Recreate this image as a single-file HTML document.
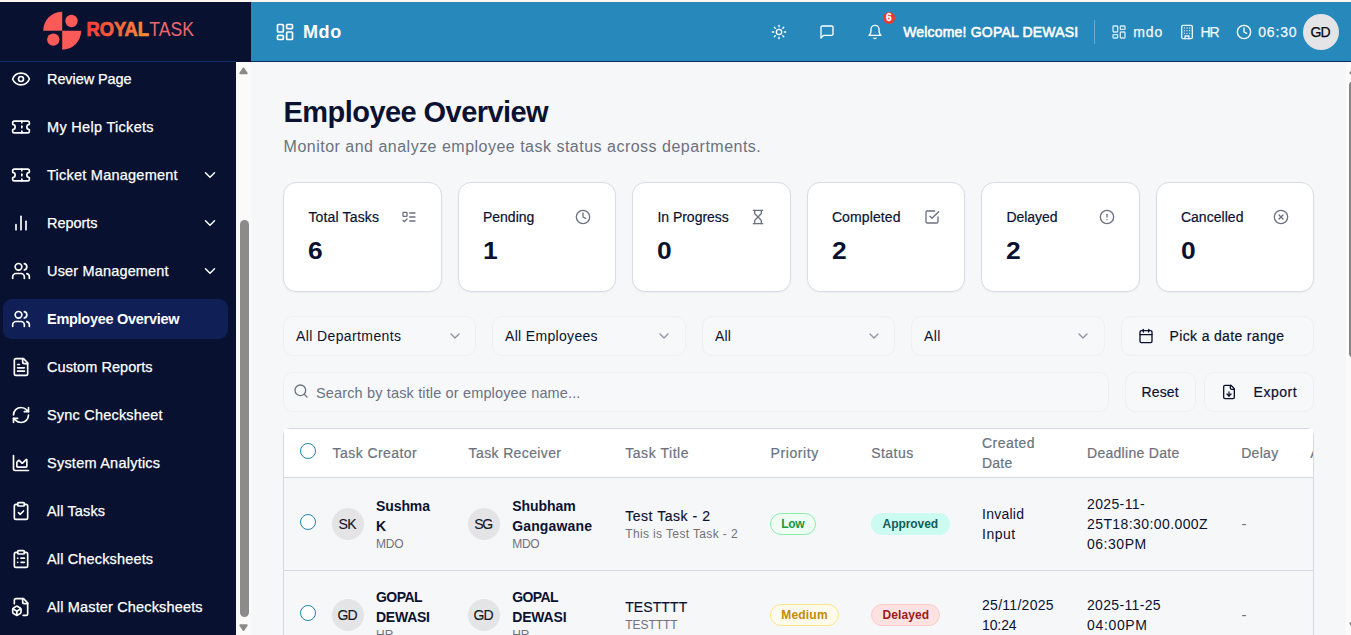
<!DOCTYPE html>
<html lang="en"><head><meta charset="utf-8"><title>Employee Overview</title>
<style>
html,body{margin:0;padding:0;}
body{width:1351px;height:635px;overflow:hidden;position:relative;background:#f6f7f9;font-family:"Liberation Sans", sans-serif;}
#app{position:absolute;left:0;top:0;width:1351px;height:635px;overflow:hidden;}
#app div,#app svg,#app span{position:absolute;box-sizing:border-box;}
#app svg{display:block;overflow:visible;}
.t{white-space:nowrap;line-height:1;}
</style></head><body><div id="app">
<div style="left:0px;top:0px;width:1351px;height:2px;background:#fff5ef;"></div>
<div style="left:0px;top:2px;width:251px;height:60px;background:#081230;"></div>
<div style="left:0px;top:61px;width:236px;height:1px;background:#172a6b;"></div>
<div style="left:0px;top:62px;width:236px;height:573px;background:#081230;"></div>
<div style="left:236px;top:62px;width:15px;height:573px;background:#fafafa;"></div>
<svg style="left:239px;top:66.6px" width="9" height="7.4" viewBox="0 0 9 7.4"><path d="M4.5 1.5 L7.7 6.2 L1.3 6.2 Z" fill="#8a8a8a" stroke="#8a8a8a" stroke-width="2" stroke-linejoin="round"/></svg>
<svg style="left:239px;top:623.8px" width="9" height="7.4" viewBox="0 0 9 7.4"><path d="M4.5 5.9 L7.7 1.2 L1.3 1.2 Z" fill="#8a8a8a" stroke="#8a8a8a" stroke-width="2" stroke-linejoin="round"/></svg>
<div style="left:239.5px;top:220px;width:9px;height:397px;background:#8b8b8b;border-radius:4.5px;"></div>
<div style="left:251px;top:2px;width:1100px;height:59px;background:#2789bb;"></div>
<div style="left:251px;top:61px;width:1100px;height:1px;background:#0a2c63;"></div>
<div style="left:251px;top:62px;width:1095px;height:573px;background:#f6f7f9;"></div>
<div style="left:1346px;top:62px;width:5px;height:573px;background:#fbfbfb;"></div>
<div style="left:1349px;top:81px;width:9px;height:277px;background:#858585;border-radius:4.5px;"></div>
<svg style="left:1349px;top:66.6px" width="9" height="7.4" viewBox="0 0 9 7.4"><path d="M4.5 1.5 L7.7 6.2 L1.3 6.2 Z" fill="#8a8a8a" stroke="#8a8a8a" stroke-width="2" stroke-linejoin="round"/></svg>
<svg style="left:1349px;top:622px" width="9" height="7.4" viewBox="0 0 9 7.4"><path d="M4.5 5.9 L7.7 1.2 L1.3 1.2 Z" fill="#8a8a8a" stroke="#8a8a8a" stroke-width="2" stroke-linejoin="round"/></svg>
<svg style="left:43px;top:11px" width="40" height="40" viewBox="0 0 40 40">
<path d="M19.2 0.8 A19 19 0 0 0 0.2 19.8 L19.2 19.8 Z" fill="#fb5a58"/>
<path d="M19.2 38.8 A19 19 0 0 0 38.2 19.8 L19.2 19.8 Z" fill="#fb5a58"/>
<circle cx="28.5" cy="10" r="6.2" fill="#fb5a58"/>
<circle cx="10.3" cy="28.6" r="6.2" fill="#fb5a58"/>
</svg>
<svg style="left:84px;top:14px" width="116" height="30" viewBox="0 0 116 30"><defs><linearGradient id="lg" gradientUnits="userSpaceOnUse" x1="2" x2="65" y1="0" y2="0"><stop offset="0" stop-color="#f53a3b"/><stop offset="1" stop-color="#fc903c"/></linearGradient></defs>
<text x="2.4" y="21.9" font-family="Liberation Sans, sans-serif" font-weight="700" font-size="20" fill="url(#lg)" stroke="url(#lg)" stroke-width="0.7" textLength="62.6" lengthAdjust="spacingAndGlyphs">ROYAL</text>
<text x="65.3" y="21.9" font-family="Liberation Sans, sans-serif" font-weight="400" font-size="20" fill="#ee6670" textLength="44.6" lengthAdjust="spacingAndGlyphs">TASK</text></svg>
<svg style="left:11.0px;top:69.0px;" width="20" height="20" viewBox="0 0 24 24" fill="none" stroke="#ffffff" stroke-width="2" stroke-linecap="round" stroke-linejoin="round"><path d="M2.062 12.348a1 1 0 0 1 0-.696 10.75 10.75 0 0 1 19.876 0 1 1 0 0 1 0 .696 10.75 10.75 0 0 1-19.876 0"/><circle cx="12" cy="12" r="3"/></svg>
<span id="t0" class="t" style="left:47.00px;top:71.73px;font-size:14.5px;color:#ffffff;letter-spacing:-0.084px;-webkit-text-stroke:0.25px #fff;">Review Page</span>
<svg style="left:11.0px;top:117.0px;" width="20" height="20" viewBox="0 0 24 24" fill="none" stroke="#ffffff" stroke-width="2" stroke-linecap="round" stroke-linejoin="round"><path d="M2 9a3 3 0 0 1 0 6v2a2 2 0 0 0 2 2h16a2 2 0 0 0 2-2v-2a3 3 0 0 1 0-6V7a2 2 0 0 0-2-2H4a2 2 0 0 0-2 2Z"/><path d="M13 5v2"/><path d="M13 17v2"/><path d="M13 11v2"/></svg>
<span id="t1" class="t" style="left:47.00px;top:119.73px;font-size:14.5px;color:#ffffff;letter-spacing:0.304px;-webkit-text-stroke:0.25px #fff;">My Help Tickets</span>
<svg style="left:11.0px;top:165.0px;" width="20" height="20" viewBox="0 0 24 24" fill="none" stroke="#ffffff" stroke-width="2" stroke-linecap="round" stroke-linejoin="round"><path d="M2 9a3 3 0 0 1 0 6v2a2 2 0 0 0 2 2h16a2 2 0 0 0 2-2v-2a3 3 0 0 1 0-6V7a2 2 0 0 0-2-2H4a2 2 0 0 0-2 2Z"/><path d="M13 5v2"/><path d="M13 17v2"/><path d="M13 11v2"/></svg>
<span id="t2" class="t" style="left:47.00px;top:167.73px;font-size:14.5px;color:#ffffff;letter-spacing:0.237px;-webkit-text-stroke:0.25px #fff;">Ticket Management</span>
<svg style="left:201.0px;top:166.0px;" width="18" height="18" viewBox="0 0 24 24" fill="none" stroke="#ffffff" stroke-width="2" stroke-linecap="round" stroke-linejoin="round"><path d="m6 9 6 6 6-6"/></svg>
<svg style="left:11.0px;top:213.0px;" width="20" height="20" viewBox="0 0 24 24" fill="none" stroke="#ffffff" stroke-width="2" stroke-linecap="round" stroke-linejoin="round"><line x1="18" x2="18" y1="20" y2="10"/><line x1="12" x2="12" y1="20" y2="4"/><line x1="6" x2="6" y1="20" y2="14"/></svg>
<span id="t3" class="t" style="left:47.00px;top:215.73px;font-size:14.5px;color:#ffffff;letter-spacing:-0.030px;-webkit-text-stroke:0.25px #fff;">Reports</span>
<svg style="left:201.0px;top:214.0px;" width="18" height="18" viewBox="0 0 24 24" fill="none" stroke="#ffffff" stroke-width="2" stroke-linecap="round" stroke-linejoin="round"><path d="m6 9 6 6 6-6"/></svg>
<svg style="left:11.0px;top:261.0px;" width="20" height="20" viewBox="0 0 24 24" fill="none" stroke="#ffffff" stroke-width="2" stroke-linecap="round" stroke-linejoin="round"><path d="M16 21v-2a4 4 0 0 0-4-4H6a4 4 0 0 0-4 4v2"/><circle cx="9" cy="7" r="4"/><path d="M22 21v-2a4 4 0 0 0-3-3.87"/><path d="M16 3.13a4 4 0 0 1 0 7.75"/></svg>
<span id="t4" class="t" style="left:47.00px;top:263.73px;font-size:14.5px;color:#ffffff;letter-spacing:0.166px;-webkit-text-stroke:0.25px #fff;">User Management</span>
<svg style="left:201.0px;top:262.0px;" width="18" height="18" viewBox="0 0 24 24" fill="none" stroke="#ffffff" stroke-width="2" stroke-linecap="round" stroke-linejoin="round"><path d="m6 9 6 6 6-6"/></svg>
<div style="left:3px;top:299px;width:225px;height:40px;background:#111f57;border-radius:9px;"></div>
<svg style="left:11.0px;top:309.0px;" width="20" height="20" viewBox="0 0 24 24" fill="none" stroke="#ffffff" stroke-width="2" stroke-linecap="round" stroke-linejoin="round"><path d="M16 21v-2a4 4 0 0 0-4-4H6a4 4 0 0 0-4 4v2"/><circle cx="9" cy="7" r="4"/><path d="M22 21v-2a4 4 0 0 0-3-3.87"/><path d="M16 3.13a4 4 0 0 1 0 7.75"/></svg>
<span id="t5" class="t" style="left:47.00px;top:311.73px;font-size:14.5px;color:#ffffff;font-weight:700;letter-spacing:-0.276px;">Employee Overview</span>
<svg style="left:11.0px;top:357.0px;" width="20" height="20" viewBox="0 0 24 24" fill="none" stroke="#ffffff" stroke-width="2" stroke-linecap="round" stroke-linejoin="round"><path d="M15 2H6a2 2 0 0 0-2 2v16a2 2 0 0 0 2 2h12a2 2 0 0 0 2-2V7Z"/><path d="M14 2v4a2 2 0 0 0 2 2h4"/><path d="M10 9H8"/><path d="M16 13H8"/><path d="M16 17H8"/></svg>
<span id="t6" class="t" style="left:47.00px;top:359.73px;font-size:14.5px;color:#ffffff;letter-spacing:0.064px;-webkit-text-stroke:0.25px #fff;">Custom Reports</span>
<svg style="left:11.0px;top:405.0px;" width="20" height="20" viewBox="0 0 24 24" fill="none" stroke="#ffffff" stroke-width="2" stroke-linecap="round" stroke-linejoin="round"><path d="M3 12a9 9 0 0 1 9-9 9.75 9.75 0 0 1 6.74 2.74L21 8"/><path d="M21 3v5h-5"/><path d="M21 12a9 9 0 0 1-9 9 9.75 9.75 0 0 1-6.74-2.74L3 16"/><path d="M8 16H3v5"/></svg>
<span id="t7" class="t" style="left:47.00px;top:407.73px;font-size:14.5px;color:#ffffff;letter-spacing:0.197px;-webkit-text-stroke:0.25px #fff;">Sync Checksheet</span>
<svg style="left:11.0px;top:453.0px;" width="20" height="20" viewBox="0 0 24 24" fill="none" stroke="#ffffff" stroke-width="2" stroke-linecap="round" stroke-linejoin="round"><path d="M3 3v16a2 2 0 0 0 2 2h16"/><path d="M7 11.207a.5.5 0 0 1 .146-.353l2-2a.5.5 0 0 1 .708 0l3.292 3.292a.5.5 0 0 0 .708 0l4.292-4.292a.5.5 0 0 1 .854.353V16a1 1 0 0 1-1 1H8a1 1 0 0 1-1-1z"/></svg>
<span id="t8" class="t" style="left:47.00px;top:455.73px;font-size:14.5px;color:#ffffff;letter-spacing:0.234px;-webkit-text-stroke:0.25px #fff;">System Analytics</span>
<svg style="left:11.0px;top:501.0px;" width="20" height="20" viewBox="0 0 24 24" fill="none" stroke="#ffffff" stroke-width="2" stroke-linecap="round" stroke-linejoin="round"><rect width="8" height="4" x="8" y="2" rx="1" ry="1"/><path d="M16 4h2a2 2 0 0 1 2 2v14a2 2 0 0 1-2 2H6a2 2 0 0 1-2-2V6a2 2 0 0 1 2-2h2"/><path d="m9 14 2 2 4-4"/></svg>
<span id="t9" class="t" style="left:47.00px;top:503.73px;font-size:14.5px;color:#ffffff;letter-spacing:0.143px;-webkit-text-stroke:0.25px #fff;">All Tasks</span>
<svg style="left:11.0px;top:549.0px;" width="20" height="20" viewBox="0 0 24 24" fill="none" stroke="#ffffff" stroke-width="2" stroke-linecap="round" stroke-linejoin="round"><rect width="8" height="4" x="8" y="2" rx="1" ry="1"/><path d="M16 4h2a2 2 0 0 1 2 2v14a2 2 0 0 1-2 2H6a2 2 0 0 1-2-2V6a2 2 0 0 1 2-2h2"/><path d="M12 11h4"/><path d="M12 16h4"/><path d="M8 11h.01"/><path d="M8 16h.01"/></svg>
<span id="t10" class="t" style="left:47.00px;top:551.73px;font-size:14.5px;color:#ffffff;letter-spacing:0.152px;-webkit-text-stroke:0.25px #fff;">All Checksheets</span>
<svg style="left:11.0px;top:597.0px;" width="20" height="20" viewBox="0 0 24 24" fill="none" stroke="#ffffff" stroke-width="2" stroke-linecap="round" stroke-linejoin="round"><path d="M14.5 22H18a2 2 0 0 0 2-2V7l-5-5H6a2 2 0 0 0-2 2v4"/><path d="M14 2v4a2 2 0 0 0 2 2h4"/><path d="M3 13.1a2 2 0 0 0-1 1.76v3.24a2 2 0 0 0 .97 1.78L6 21.7a2 2 0 0 0 2.03.01L11 19.9a2 2 0 0 0 1-1.76V14.9a2 2 0 0 0-.97-1.78L8 11.3a2 2 0 0 0-2.03-.01Z"/><path d="M7 17v5"/><path d="M11.7 14.2 7 17l-4.7-2.8"/></svg>
<span id="t11" class="t" style="left:47.00px;top:599.73px;font-size:14.5px;color:#ffffff;letter-spacing:0.157px;-webkit-text-stroke:0.25px #fff;">All Master Checksheets</span>
<svg style="left:275.0px;top:22.0px;" width="20" height="20" viewBox="0 0 24 24" fill="none" stroke="#ffffff" stroke-width="2" stroke-linecap="round" stroke-linejoin="round"><rect width="7" height="9" x="3" y="3" rx="1"/><rect width="7" height="5" x="14" y="3" rx="1"/><rect width="7" height="9" x="14" y="12" rx="1"/><rect width="7" height="5" x="3" y="16" rx="1"/></svg>
<span id="t12" class="t" style="left:303.00px;top:22.76px;font-size:18px;color:#ffffff;font-weight:700;letter-spacing:0.608px;">Mdo</span>
<svg style="left:771.0px;top:24.0px;" width="16" height="16" viewBox="0 0 24 24" fill="none" stroke="#ffffff" stroke-width="2" stroke-linecap="round" stroke-linejoin="round"><circle cx="12" cy="12" r="4"/><path d="M12 2v2"/><path d="M12 20v2"/><path d="m4.93 4.93 1.41 1.41"/><path d="m17.66 17.66 1.41 1.41"/><path d="M2 12h2"/><path d="M20 12h2"/><path d="m6.34 17.66-1.41 1.41"/><path d="m19.07 4.93-1.41 1.41"/></svg>
<svg style="left:819.0px;top:24.0px;" width="16" height="16" viewBox="0 0 24 24" fill="none" stroke="#ffffff" stroke-width="2" stroke-linecap="round" stroke-linejoin="round"><path d="M21 15a2 2 0 0 1-2 2H7l-4 4V5a2 2 0 0 1 2-2h14a2 2 0 0 1 2 2z"/></svg>
<svg style="left:867.0px;top:24.0px;" width="16" height="16" viewBox="0 0 24 24" fill="none" stroke="#ffffff" stroke-width="2" stroke-linecap="round" stroke-linejoin="round"><path d="M6 8a6 6 0 0 1 12 0c0 7 3 9 3 9H3s3-2 3-9"/><path d="M10.3 21a1.94 1.94 0 0 0 3.4 0"/></svg>
<div style="left:882.7px;top:11.6px;width:12.6px;height:12.6px;background:#e63b30;border-radius:50%;"></div>
<span id="t13" class="t" style="left:888.70px;top:13.43px;font-size:10px;color:#ffffff;font-weight:700;transform:translateX(-50%);-webkit-text-stroke:0.3px #fff;">6</span>
<span id="t14" class="t" style="left:903.20px;top:25.15px;font-size:14px;color:#ffffff;letter-spacing:0.187px;-webkit-text-stroke:0.55px #fff;">Welcome! GOPAL DEWASI</span>
<div style="left:1094px;top:20px;width:1px;height:24px;background:rgba(255,255,255,0.3);"></div>
<svg style="left:1111.0px;top:24.0px;" width="16" height="16" viewBox="0 0 24 24" fill="none" stroke="#d3e7f1" stroke-width="2" stroke-linecap="round" stroke-linejoin="round"><rect width="7" height="9" x="3" y="3" rx="1"/><rect width="7" height="5" x="14" y="3" rx="1"/><rect width="7" height="9" x="14" y="12" rx="1"/><rect width="7" height="5" x="3" y="16" rx="1"/></svg>
<span id="t15" class="t" style="left:1133.20px;top:25.15px;font-size:14px;color:#f2f8fb;letter-spacing:0.883px;-webkit-text-stroke:0.25px #f2f8fb;">mdo</span>
<svg style="left:1179.0px;top:24.0px;" width="16" height="16" viewBox="0 0 24 24" fill="none" stroke="#e9f3f8" stroke-width="2" stroke-linecap="round" stroke-linejoin="round"><rect width="16" height="20" x="4" y="2" rx="2" ry="2"/><path d="M9 22v-4h6v4"/><path d="M8 6h.01"/><path d="M16 6h.01"/><path d="M12 6h.01"/><path d="M12 10h.01"/><path d="M12 14h.01"/><path d="M16 10h.01"/><path d="M16 14h.01"/><path d="M8 10h.01"/><path d="M8 14h.01"/></svg>
<span id="t16" class="t" style="left:1200.60px;top:25.15px;font-size:14px;color:#f2f8fb;letter-spacing:-1.234px;-webkit-text-stroke:0.25px #f2f8fb;">HR</span>
<svg style="left:1236.0px;top:24.0px;" width="16" height="16" viewBox="0 0 24 24" fill="none" stroke="#ffffff" stroke-width="2" stroke-linecap="round" stroke-linejoin="round"><circle cx="12" cy="12" r="10"/><polyline points="12 6 12 12 16 14"/></svg>
<span id="t17" class="t" style="left:1258.20px;top:25.15px;font-size:14px;color:#f2f8fb;letter-spacing:0.838px;-webkit-text-stroke:0.25px #f2f8fb;">06:30</span>
<div style="left:1303px;top:14px;width:36px;height:36px;background:#e4e4e7;border-radius:50%;"></div>
<span id="t18" class="t" style="left:1310.60px;top:25.15px;font-size:14px;color:#09090b;letter-spacing:-1.000px;-webkit-text-stroke:0.25px #09090b;">GD</span>
<span id="t19" class="t" style="left:283.60px;top:98.45px;font-size:29px;color:#0b1231;font-weight:700;letter-spacing:-0.564px;">Employee Overview</span>
<span id="t20" class="t" style="left:283.60px;top:139.46px;font-size:16px;color:#6b7280;letter-spacing:0.491px;">Monitor and analyze employee task status across departments.</span>
<div style="left:283px;top:182px;width:159px;height:110px;background:#fff;border:1px solid #d9dce5;border-radius:13px;box-shadow:0 1px 2px rgba(0,0,0,0.04);"></div>
<span id="t21" class="t" style="left:308.40px;top:210.15px;font-size:14px;color:#0b1231;letter-spacing:0.160px;-webkit-text-stroke:0.2px #0b1231;">Total Tasks</span>
<svg style="left:400.8px;top:209.0px;" width="16" height="16" viewBox="0 0 24 24" fill="none" stroke="#6b7280" stroke-width="2" stroke-linecap="round" stroke-linejoin="round"><rect x="3" y="5" width="6" height="6" rx="1"/><path d="m3 17 2 2 4-4"/><path d="M13 6h8"/><path d="M13 12h8"/><path d="M13 18h8"/></svg>
<span id="t22" class="t" style="left:308.10px;top:239.18px;font-size:24px;color:#0b1231;font-weight:700;transform:scaleX(1.1);transform-origin:0 0;">6</span>
<div style="left:458px;top:182px;width:158px;height:110px;background:#fff;border:1px solid #d9dce5;border-radius:13px;box-shadow:0 1px 2px rgba(0,0,0,0.04);"></div>
<span id="t23" class="t" style="left:482.90px;top:210.15px;font-size:14px;color:#0b1231;letter-spacing:0.018px;-webkit-text-stroke:0.2px #0b1231;">Pending</span>
<svg style="left:575.3px;top:209.0px;" width="16" height="16" viewBox="0 0 24 24" fill="none" stroke="#6b7280" stroke-width="2" stroke-linecap="round" stroke-linejoin="round"><circle cx="12" cy="12" r="10"/><polyline points="12 6 12 12 16 14"/></svg>
<span id="t24" class="t" style="left:482.60px;top:239.18px;font-size:24px;color:#0b1231;font-weight:700;transform:scaleX(1.1);transform-origin:0 0;">1</span>
<div style="left:632px;top:182px;width:159px;height:110px;background:#fff;border:1px solid #d9dce5;border-radius:13px;box-shadow:0 1px 2px rgba(0,0,0,0.04);"></div>
<span id="t25" class="t" style="left:657.40px;top:210.15px;font-size:14px;color:#0b1231;letter-spacing:-0.019px;-webkit-text-stroke:0.2px #0b1231;">In Progress</span>
<svg style="left:749.8px;top:209.0px;" width="16" height="16" viewBox="0 0 24 24" fill="none" stroke="#6b7280" stroke-width="2" stroke-linecap="round" stroke-linejoin="round"><path d="M5 22h14"/><path d="M5 2h14"/><path d="M17 22v-4.172a2 2 0 0 0-.586-1.414L12 12l-4.414 4.414A2 2 0 0 0 7 17.828V22"/><path d="M7 2v4.172a2 2 0 0 0 .586 1.414L12 12l4.414-4.414A2 2 0 0 0 17 6.172V2"/></svg>
<span id="t26" class="t" style="left:657.10px;top:239.18px;font-size:24px;color:#0b1231;font-weight:700;transform:scaleX(1.1);transform-origin:0 0;">0</span>
<div style="left:807px;top:182px;width:158px;height:110px;background:#fff;border:1px solid #d9dce5;border-radius:13px;box-shadow:0 1px 2px rgba(0,0,0,0.04);"></div>
<span id="t27" class="t" style="left:831.90px;top:210.15px;font-size:14px;color:#0b1231;letter-spacing:0.112px;-webkit-text-stroke:0.2px #0b1231;">Completed</span>
<svg style="left:924.3px;top:209.0px;" width="16" height="16" viewBox="0 0 24 24" fill="none" stroke="#6b7280" stroke-width="2" stroke-linecap="round" stroke-linejoin="round"><path d="m9 11 3 3L22 4"/><path d="M21 12v7a2 2 0 0 1-2 2H5a2 2 0 0 1-2-2V5a2 2 0 0 1 2-2h11"/></svg>
<span id="t28" class="t" style="left:831.60px;top:239.18px;font-size:24px;color:#0b1231;font-weight:700;transform:scaleX(1.1);transform-origin:0 0;">2</span>
<div style="left:981px;top:182px;width:159px;height:110px;background:#fff;border:1px solid #d9dce5;border-radius:13px;box-shadow:0 1px 2px rgba(0,0,0,0.04);"></div>
<span id="t29" class="t" style="left:1006.40px;top:210.15px;font-size:14px;color:#0b1231;letter-spacing:-0.046px;-webkit-text-stroke:0.2px #0b1231;">Delayed</span>
<svg style="left:1098.8px;top:209.0px;" width="16" height="16" viewBox="0 0 24 24" fill="none" stroke="#6b7280" stroke-width="2" stroke-linecap="round" stroke-linejoin="round"><circle cx="12" cy="12" r="10"/><line x1="12" x2="12" y1="8" y2="12"/><line x1="12" x2="12.01" y1="16" y2="16"/></svg>
<span id="t30" class="t" style="left:1006.10px;top:239.18px;font-size:24px;color:#0b1231;font-weight:700;transform:scaleX(1.1);transform-origin:0 0;">2</span>
<div style="left:1156px;top:182px;width:158px;height:110px;background:#fff;border:1px solid #d9dce5;border-radius:13px;box-shadow:0 1px 2px rgba(0,0,0,0.04);"></div>
<span id="t31" class="t" style="left:1180.90px;top:210.15px;font-size:14px;color:#0b1231;letter-spacing:0.042px;-webkit-text-stroke:0.2px #0b1231;">Cancelled</span>
<svg style="left:1273.3px;top:209.0px;" width="16" height="16" viewBox="0 0 24 24" fill="none" stroke="#6b7280" stroke-width="2" stroke-linecap="round" stroke-linejoin="round"><circle cx="12" cy="12" r="10"/><path d="m15 9-6 6"/><path d="m9 9 6 6"/></svg>
<span id="t32" class="t" style="left:1180.60px;top:239.18px;font-size:24px;color:#0b1231;font-weight:700;transform:scaleX(1.1);transform-origin:0 0;">0</span>
<div style="left:283px;top:316px;width:193px;height:40px;border:1px solid #eef0f3;border-radius:10px;background:#f7f8fa;"></div>
<span id="t33" class="t" style="left:296.00px;top:329.15px;font-size:14px;color:#0b1231;letter-spacing:0.386px;">All Departments</span>
<svg style="left:447.0px;top:328.0px;" width="16" height="16" viewBox="0 0 24 24" fill="none" stroke="#8f94a3" stroke-width="2" stroke-linecap="round" stroke-linejoin="round"><path d="m6 9 6 6 6-6"/></svg>
<div style="left:492px;top:316px;width:194px;height:40px;border:1px solid #eef0f3;border-radius:10px;background:#f7f8fa;"></div>
<span id="t34" class="t" style="left:505.00px;top:329.15px;font-size:14px;color:#0b1231;letter-spacing:0.325px;">All Employees</span>
<svg style="left:656.0px;top:328.0px;" width="16" height="16" viewBox="0 0 24 24" fill="none" stroke="#8f94a3" stroke-width="2" stroke-linecap="round" stroke-linejoin="round"><path d="m6 9 6 6 6-6"/></svg>
<div style="left:702px;top:316px;width:193px;height:40px;border:1px solid #eef0f3;border-radius:10px;background:#f7f8fa;"></div>
<span id="t35" class="t" style="left:715.00px;top:329.15px;font-size:14px;color:#0b1231;letter-spacing:0.119px;">All</span>
<svg style="left:866.0px;top:328.0px;" width="16" height="16" viewBox="0 0 24 24" fill="none" stroke="#8f94a3" stroke-width="2" stroke-linecap="round" stroke-linejoin="round"><path d="m6 9 6 6 6-6"/></svg>
<div style="left:911px;top:316px;width:194px;height:40px;border:1px solid #eef0f3;border-radius:10px;background:#f7f8fa;"></div>
<span id="t36" class="t" style="left:924.00px;top:329.15px;font-size:14px;color:#0b1231;letter-spacing:0.419px;">All</span>
<svg style="left:1075.0px;top:328.0px;" width="16" height="16" viewBox="0 0 24 24" fill="none" stroke="#8f94a3" stroke-width="2" stroke-linecap="round" stroke-linejoin="round"><path d="m6 9 6 6 6-6"/></svg>
<div style="left:1121px;top:316px;width:193px;height:40px;border:1px solid #eef0f3;border-radius:10px;background:#f7f8fa;"></div>
<svg style="left:1138.0px;top:328.0px;" width="16" height="16" viewBox="0 0 24 24" fill="none" stroke="#0b1231" stroke-width="2" stroke-linecap="round" stroke-linejoin="round"><path d="M8 2v4"/><path d="M16 2v4"/><rect width="18" height="18" x="3" y="4" rx="2"/><path d="M3 10h18"/></svg>
<span id="t37" class="t" style="left:1169.60px;top:329.15px;font-size:14px;color:#0b1231;letter-spacing:0.339px;-webkit-text-stroke:0.2px #0b1231;">Pick a date range</span>
<div style="left:283px;top:372px;width:825.5px;height:40px;border:1px solid #eef0f3;border-radius:10px;background:#f7f8fa;"></div>
<svg style="left:293.0px;top:382.5px;" width="16" height="16" viewBox="0 0 24 24" fill="none" stroke="#6b7280" stroke-width="2" stroke-linecap="round" stroke-linejoin="round"><circle cx="11" cy="11" r="8"/><path d="m21 21-4.3-4.3"/></svg>
<span id="t38" class="t" style="left:316.00px;top:385.73px;font-size:14.5px;color:#6b7280;letter-spacing:0.146px;">Search by task title or employee name...</span>
<div style="left:1125px;top:372px;width:71px;height:40px;border:1px solid #eef0f3;border-radius:10px;background:#f7f8fa;"></div>
<span id="t39" class="t" style="left:1141.60px;top:385.15px;font-size:14px;color:#0b1231;letter-spacing:0.105px;-webkit-text-stroke:0.2px #0b1231;">Reset</span>
<div style="left:1204px;top:372px;width:110px;height:40px;border:1px solid #eef0f3;border-radius:10px;background:#f7f8fa;"></div>
<svg style="left:1221.0px;top:384.0px;" width="16" height="16" viewBox="0 0 24 24" fill="none" stroke="#0b1231" stroke-width="2" stroke-linecap="round" stroke-linejoin="round"><path d="M15 2H6a2 2 0 0 0-2 2v16a2 2 0 0 0 2 2h12a2 2 0 0 0 2-2V7Z"/><path d="M14 2v4a2 2 0 0 0 2 2h4"/><path d="M12 18v-6"/><path d="m9 15 3 3 3-3"/></svg>
<span id="t40" class="t" style="left:1253.60px;top:385.15px;font-size:14px;color:#0b1231;letter-spacing:0.506px;-webkit-text-stroke:0.2px #0b1231;">Export</span>
<div style="left:283px;top:428px;width:1031px;height:240px;border:1px solid #d6d9e3;border-radius:7px;"></div>
<div style="left:284px;top:429px;width:1029px;height:48px;background:#fff;"></div>
<div style="left:284px;top:477px;width:1029px;height:1px;background:#d6d9e3;"></div>
<div style="left:284px;top:570px;width:1029px;height:1px;background:#d6d9e3;"></div>
<div style="left:300px;top:443px;width:16px;height:16px;border:1px solid #2585b5;border-radius:50%;background:#fff;box-sizing:border-box;"></div>
<span id="t41" class="t" style="left:332.60px;top:446.15px;font-size:14px;color:#6b7280;letter-spacing:0.422px;-webkit-text-stroke:0.2px #6b7280;">Task Creator</span>
<span id="t42" class="t" style="left:468.60px;top:446.15px;font-size:14px;color:#6b7280;letter-spacing:0.373px;-webkit-text-stroke:0.2px #6b7280;">Task Receiver</span>
<span id="t43" class="t" style="left:625.20px;top:446.15px;font-size:14px;color:#6b7280;letter-spacing:0.560px;-webkit-text-stroke:0.2px #6b7280;">Task Title</span>
<span id="t44" class="t" style="left:770.60px;top:446.15px;font-size:14px;color:#6b7280;letter-spacing:0.577px;-webkit-text-stroke:0.2px #6b7280;">Priority</span>
<span id="t45" class="t" style="left:871.20px;top:446.15px;font-size:14px;color:#6b7280;letter-spacing:0.459px;-webkit-text-stroke:0.2px #6b7280;">Status</span>
<span id="t46" class="t" style="left:982.00px;top:435.75px;font-size:14px;color:#6b7280;letter-spacing:0.465px;-webkit-text-stroke:0.2px #6b7280;">Created</span>
<span id="t47" class="t" style="left:982.00px;top:455.75px;font-size:14px;color:#6b7280;letter-spacing:0.207px;-webkit-text-stroke:0.2px #6b7280;">Date</span>
<span id="t48" class="t" style="left:1087.00px;top:446.15px;font-size:14px;color:#6b7280;letter-spacing:0.289px;-webkit-text-stroke:0.2px #6b7280;">Deadline Date</span>
<span id="t49" class="t" style="left:1241.20px;top:446.15px;font-size:14px;color:#6b7280;letter-spacing:0.301px;-webkit-text-stroke:0.2px #6b7280;">Delay</span>
<div style="left:1300px;top:440px;width:13px;height:30px;overflow:hidden;">
<span id="t50" class="t" style="left:10.20px;top:6.15px;font-size:14px;color:#6b7280;-webkit-text-stroke:0.2px #6b7280;">Actions</span>
</div>
<div style="left:300px;top:514px;width:16px;height:16px;border:1px solid #2585b5;border-radius:50%;background:#fff;box-sizing:border-box;"></div>
<div style="left:332px;top:508px;width:32px;height:32px;background:#e4e4e7;border-radius:50%;"></div>
<span id="t51" class="t" style="left:338.60px;top:517.15px;font-size:14px;color:#18181b;letter-spacing:-0.688px;-webkit-text-stroke:0.15px #18181b;">SK</span>
<span id="t52" class="t" style="left:376.00px;top:499.15px;font-size:14px;color:#0b1231;font-weight:700;letter-spacing:-0.094px;">Sushma</span>
<span id="t53" class="t" style="left:376.00px;top:519.15px;font-size:14px;color:#0b1231;font-weight:700;">K</span>
<span id="t54" class="t" style="left:376.00px;top:538.04px;font-size:12px;color:#71717a;letter-spacing:-0.200px;">MDO</span>
<div style="left:468px;top:508px;width:32px;height:32px;background:#e4e4e7;border-radius:50%;"></div>
<span id="t55" class="t" style="left:474.20px;top:517.15px;font-size:14px;color:#18181b;letter-spacing:-1.234px;-webkit-text-stroke:0.15px #18181b;">SG</span>
<span id="t56" class="t" style="left:512.20px;top:499.15px;font-size:14px;color:#0b1231;font-weight:700;letter-spacing:-0.064px;">Shubham</span>
<span id="t57" class="t" style="left:512.20px;top:519.15px;font-size:14px;color:#0b1231;font-weight:700;letter-spacing:0.151px;">Gangawane</span>
<span id="t58" class="t" style="left:512.20px;top:538.04px;font-size:12px;color:#71717a;letter-spacing:-0.300px;">MDO</span>
<span id="t59" class="t" style="left:625.20px;top:508.75px;font-size:14px;color:#0b1231;letter-spacing:0.539px;-webkit-text-stroke:0.18px #0b1231;">Test Task - 2</span>
<span id="t60" class="t" style="left:625.20px;top:528.24px;font-size:12px;color:#71717a;letter-spacing:0.373px;">This is Test Task - 2</span>
<div style="left:770px;top:513px;width:46px;height:22px;border:1px solid #86efac;background:#f0fdf4;border-radius:11px;box-sizing:border-box;"></div>
<span id="t61" class="t" style="left:781.20px;top:518.04px;font-size:12px;color:#16993f;font-weight:700;letter-spacing:-0.300px;">Low</span>
<div style="left:871px;top:513px;width:78.6px;height:22px;background:#ccfbf1;border-radius:11px;"></div>
<span id="t62" class="t" style="left:882.60px;top:518.04px;font-size:12px;color:#115e59;font-weight:700;letter-spacing:-0.059px;">Approved</span>
<span id="t63" class="t" style="left:982.00px;top:507.15px;font-size:14px;color:#0b1231;letter-spacing:0.255px;">Invalid</span>
<span id="t64" class="t" style="left:982.00px;top:526.95px;font-size:14px;color:#0b1231;letter-spacing:0.515px;">Input</span>
<span id="t65" class="t" style="left:1087.00px;top:497.15px;font-size:14px;color:#0b1231;letter-spacing:0.369px;">2025-11-</span>
<span id="t66" class="t" style="left:1087.00px;top:517.15px;font-size:14px;color:#0b1231;letter-spacing:0.412px;">25T18:30:00.000Z</span>
<span id="t67" class="t" style="left:1087.00px;top:537.15px;font-size:14px;color:#0b1231;letter-spacing:0.526px;">06:30PM</span>
<span id="t68" class="t" style="left:1241.40px;top:516.10px;font-size:15px;color:#6b7280;">-</span>
<div style="left:300px;top:605px;width:16px;height:16px;border:1px solid #2585b5;border-radius:50%;background:#fff;box-sizing:border-box;"></div>
<div style="left:332px;top:599px;width:32px;height:32px;background:#e4e4e7;border-radius:50%;"></div>
<span id="t69" class="t" style="left:337.60px;top:608.15px;font-size:14px;color:#18181b;letter-spacing:-1.000px;-webkit-text-stroke:0.15px #18181b;">GD</span>
<span id="t70" class="t" style="left:376.00px;top:590.15px;font-size:14px;color:#0b1231;font-weight:700;letter-spacing:-0.537px;">GOPAL</span>
<span id="t71" class="t" style="left:376.00px;top:610.15px;font-size:14px;color:#0b1231;font-weight:700;letter-spacing:-0.247px;">DEWASI</span>
<span id="t72" class="t" style="left:376.00px;top:629.04px;font-size:12px;color:#71717a;">HR</span>
<div style="left:468px;top:599px;width:32px;height:32px;background:#e4e4e7;border-radius:50%;"></div>
<span id="t73" class="t" style="left:473.60px;top:608.15px;font-size:14px;color:#18181b;letter-spacing:-1.000px;-webkit-text-stroke:0.15px #18181b;">GD</span>
<span id="t74" class="t" style="left:512.20px;top:590.15px;font-size:14px;color:#0b1231;font-weight:700;letter-spacing:-0.588px;">GOPAL</span>
<span id="t75" class="t" style="left:512.20px;top:610.15px;font-size:14px;color:#0b1231;font-weight:700;letter-spacing:-0.167px;">DEWASI</span>
<span id="t76" class="t" style="left:512.20px;top:629.04px;font-size:12px;color:#71717a;">HR</span>
<span id="t77" class="t" style="left:625.20px;top:600.15px;font-size:14px;color:#0b1231;letter-spacing:0.094px;-webkit-text-stroke:0.18px #0b1231;">TESTTTT</span>
<span id="t78" class="t" style="left:625.20px;top:619.14px;font-size:12px;color:#71717a;letter-spacing:-0.045px;">TESTTTT</span>
<div style="left:770px;top:604px;width:69px;height:22px;border:1px solid #fde68a;background:#fffbeb;border-radius:11px;box-sizing:border-box;"></div>
<span id="t79" class="t" style="left:781.20px;top:609.04px;font-size:12px;color:#c28a0c;font-weight:700;letter-spacing:0.211px;">Medium</span>
<div style="left:871px;top:604px;width:69px;height:22px;border:1px solid #fecaca;background:#fee2e2;border-radius:11px;box-sizing:border-box;"></div>
<span id="t80" class="t" style="left:882.60px;top:609.04px;font-size:12px;color:#991b1b;font-weight:700;letter-spacing:0.095px;">Delayed</span>
<span id="t81" class="t" style="left:982.00px;top:598.15px;font-size:14px;color:#0b1231;letter-spacing:0.285px;">25/11/2025</span>
<span id="t82" class="t" style="left:982.00px;top:617.95px;font-size:14px;color:#0b1231;letter-spacing:-0.112px;">10:24</span>
<span id="t83" class="t" style="left:1087.00px;top:598.15px;font-size:14px;color:#0b1231;letter-spacing:0.336px;">2025-11-25</span>
<span id="t84" class="t" style="left:1087.00px;top:617.95px;font-size:14px;color:#0b1231;letter-spacing:0.659px;">04:00PM</span>
<span id="t85" class="t" style="left:1241.40px;top:607.10px;font-size:15px;color:#6b7280;">-</span>
</div></body></html>
